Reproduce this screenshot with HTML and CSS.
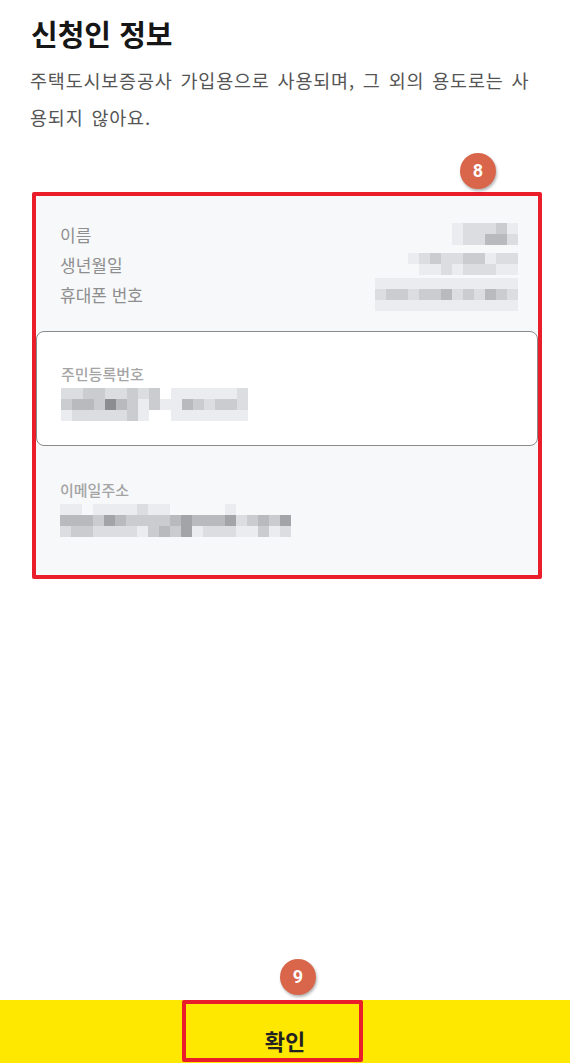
FILE: index.html
```html
<!DOCTYPE html>
<html lang="ko">
  <head>
    <meta charset="UTF-8" />
    <meta name="viewport" content="width=device-width, initial-scale=1.0" />
    <title>신청인 정보</title>
    <link rel="stylesheet" href="styles.css">
  </head>
  <body>
    <div class="page">
      <header class="intro">
        <h1>신청인 정보</h1>
        <p>주택도시보증공사 가입용으로 사용되며, 그 외의 용도로는 사용되지 않아요.</p>
      </header>

      <!-- annotation 8: applicant card -->
      <section class="highlight">
        <span class="badge badge-card">8</span>
        <div class="card">
          <div class="summary">
            <div class="row">
              <span class="label">이름</span>
              <div class="mosaic cols-6">
                <i class="s1"></i><i class="s2"></i><i class="s2"></i><i class="s2"></i><i class="s3"></i><i class="s1"></i>
                <i class="s1"></i><i class="s2"></i><i class="s2"></i><i class="s4"></i><i class="s4"></i><i class="s2"></i>
              </div>
            </div>
            <div class="row">
              <span class="label">생년월일</span>
              <div class="mosaic cols-10">
                <i class="s1"></i><i class="s2"></i><i class="s3"></i><i class="s2"></i><i class="s2"></i><i class="s3"></i><i class="s3"></i><i class="s1"></i><i class="s2"></i><i class="s2"></i>
                <i class="s0"></i><i class="s1"></i><i class="s1"></i><i class="s2"></i><i class="s1"></i><i class="s2"></i><i class="s2"></i><i class="s2"></i><i class="s1"></i><i class="s1"></i>
              </div>
            </div>
            <div class="row">
              <span class="label">휴대폰 번호</span>
              <div class="mosaic cols-13">
                <i class="s1"></i><i class="s1"></i><i class="s1"></i><i class="s1"></i><i class="s1"></i><i class="s1"></i><i class="s1"></i><i class="s1"></i><i class="s1"></i><i class="s1"></i><i class="s1"></i><i class="s1"></i><i class="s1"></i>
                <i class="s2"></i><i class="s3"></i><i class="s3"></i><i class="s2"></i><i class="s3"></i><i class="s3"></i><i class="s4"></i><i class="s2"></i><i class="s3"></i><i class="s2"></i><i class="s4"></i><i class="s3"></i><i class="s2"></i>
                <i class="s1"></i><i class="s1"></i><i class="s1"></i><i class="s1"></i><i class="s1"></i><i class="s1"></i><i class="s1"></i><i class="s1"></i><i class="s1"></i><i class="s1"></i><i class="s1"></i><i class="s1"></i><i class="s1"></i>
              </div>
            </div>
          </div>

          <div class="field field-active">
            <span class="field-label">주민등록번호</span>
            <div class="mosaic cols-17">
              <i class="s2"></i><i class="s2"></i><i class="s3"></i><i class="s3"></i><i class="s2"></i><i class="s2"></i><i class="s3"></i><i class="s2"></i><i class="s3"></i><i class="s0"></i><i class="s1"></i><i class="s1"></i><i class="s1"></i><i class="s1"></i><i class="s1"></i><i class="s1"></i><i class="s2"></i>
              <i class="s3"></i><i class="s4"></i><i class="s4"></i><i class="s3"></i><i class="s6"></i><i class="s4"></i><i class="s3"></i><i class="s1"></i><i class="s3"></i><i class="s1"></i><i class="s1"></i><i class="s4"></i><i class="s3"></i><i class="s2"></i><i class="s3"></i><i class="s3"></i><i class="s2"></i>
              <i class="s1"></i><i class="s2"></i><i class="s2"></i><i class="s2"></i><i class="s2"></i><i class="s2"></i><i class="s3"></i><i class="s1"></i><i class="s0"></i><i class="s0"></i><i class="s1"></i><i class="s1"></i><i class="s1"></i><i class="s1"></i><i class="s1"></i><i class="s1"></i><i class="s1"></i>
            </div>
          </div>

          <div class="field">
            <span class="field-label">이메일주소</span>
            <div class="mosaic cols-21">
              <i class="s1"></i><i class="s1"></i><i class="s0"></i><i class="s1"></i><i class="s1"></i><i class="s1"></i><i class="s1"></i><i class="s2"></i><i class="s1"></i><i class="s1"></i><i class="s0"></i><i class="s0"></i><i class="s0"></i><i class="s0"></i><i class="s0"></i><i class="s1"></i><i class="s0"></i><i class="s0"></i><i class="s0"></i><i class="s0"></i><i class="s0"></i>
              <i class="s4"></i><i class="s4"></i><i class="s4"></i><i class="s3"></i><i class="s5"></i><i class="s4"></i><i class="s3"></i><i class="s3"></i><i class="s3"></i><i class="s3"></i><i class="s4"></i><i class="s5"></i><i class="s4"></i><i class="s4"></i><i class="s4"></i><i class="s5"></i><i class="s2"></i><i class="s3"></i><i class="s4"></i><i class="s3"></i><i class="s5"></i>
              <i class="s2"></i><i class="s3"></i><i class="s3"></i><i class="s2"></i><i class="s2"></i><i class="s2"></i><i class="s2"></i><i class="s1"></i><i class="s3"></i><i class="s4"></i><i class="s3"></i><i class="s5"></i><i class="s1"></i><i class="s2"></i><i class="s2"></i><i class="s2"></i><i class="s1"></i><i class="s1"></i><i class="s3"></i><i class="s1"></i><i class="s2"></i>
            </div>
          </div>
        </div>
      </section>

      <footer class="bottom-bar">
        <button class="confirm">확인</button>
        <!-- annotation 9: confirm button -->
        <div class="highlight-btn">
          <span class="badge badge-btn">9</span>
        </div>
      </footer>
    </div>
  </body>
</html>
```

FILE: styles.css
```css
body {
  margin: 0;
  padding: 0;
  background-color: #fff;
  font-family: "Noto Sans CJK KR", "Noto Sans", sans-serif;
  color: #1a1a1a;
}

.page {
  display: flex;
  flex-direction: column;
  height: 1063px;
  overflow: hidden;
}

.intro {
  padding: 15px 28px 0 31px;
}

.intro h1 {
  margin: 0;
  font-size: 29px;
  line-height: 36px;
  font-weight: 700;
  color: #161616;
}

.intro p {
  margin: 11px 0 0 -1px;
  font-size: 18.5px;
  line-height: 37px;
  letter-spacing: 0.8px;
  word-spacing: 2px;
  color: #555;
}

/* red annotation frame around the card */
.highlight {
  position: relative;
  margin: 56px 28px 0 32px;
  border: 4px solid #ea1d2a;
  border-radius: 2px;
}

.card {
  background-color: #f7f8fa;
}

.summary {
  padding: 23px 20px 22px 24px;
}

.row {
  display: flex;
  justify-content: space-between;
  align-items: center;
  height: 30px;
}

.label {
  font-size: 17px;
  color: #8e8e8e;
}

.field {
  padding: 34px 20px 38px 24px;
}

.field-active {
  padding: 32px 20px 24px 24px;
  background-color: #fff;
  border: 1px solid #8a8a8a;
  border-radius: 8px;
}

.field-label {
  display: block;
  font-size: 15px;
  line-height: 20px;
  font-weight: 500;
  color: #a4a4a4;
}

.field .mosaic {
  margin-top: 4px;
}

/* pixelated private values */
.mosaic {
  display: grid;
  grid-auto-rows: 11px;
}

.cols-6 { grid-template-columns: repeat(6, 11px); }
.cols-10 { grid-template-columns: repeat(10, 11px); }
.cols-13 { grid-template-columns: repeat(13, 11px); }
.cols-17 { grid-template-columns: repeat(17, 11px); }
.cols-21 { grid-template-columns: repeat(21, 11px); }

.s0 { background-color: transparent; }
.s1 { background-color: #ebecef; }
.s2 { background-color: #dcdde0; }
.s3 { background-color: #cbccd0; }
.s4 { background-color: #b9babd; }
.s5 { background-color: #a3a4a7; }
.s6 { background-color: #8c8d90; }

.badge {
  position: absolute;
  width: 36px;
  height: 36px;
  border-radius: 50%;
  background-color: #d9664a;
  color: #fff;
  font-family: "Roboto", "Noto Sans", sans-serif;
  font-size: 18px;
  font-weight: 700;
  line-height: 36px;
  text-align: center;
  box-shadow: 1px 2px 3px rgba(0, 0, 0, 0.3);
}

.badge-card {
  top: -43px;
  left: 424px;
}

.bottom-bar {
  position: relative;
  margin-top: auto;
  height: 63px;
  background-color: #ffe800;
  display: flex;
  justify-content: center;
}

.confirm {
  border: 0;
  background: transparent;
  padding: 26px 0 0;
  font-family: "Noto Sans CJK KR", sans-serif;
  font-size: 22px;
  line-height: 28px;
  font-weight: 700;
  color: #222;
  height: 63px;
  display: flex;
  align-items: flex-start;
}

.highlight-btn {
  position: absolute;
  top: 0;
  left: 182px;
  width: 181px;
  height: 62px;
  box-sizing: border-box;
  border: 4px solid #ea1d2a;
  border-radius: 2px;
}

.badge-btn {
  top: -45px;
  left: 94px;
}
```
